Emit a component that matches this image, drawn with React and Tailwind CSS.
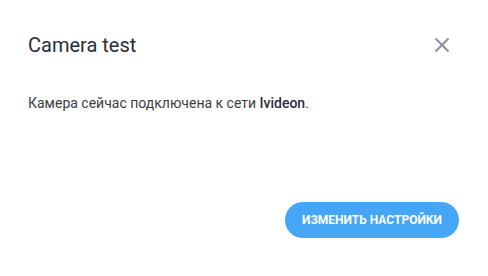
export default function App() {
  return (
    <div className="w-[488px] h-[276px] bg-white flex flex-col px-[28px] pt-[32px] pb-[38px]" style={{ fontFamily: 'Roboto, "Liberation Sans", sans-serif' }}>
      <div className="flex items-center justify-between">
        <h1 className="text-[20px] leading-[26px] font-normal text-[#2b2e36]">Camera test</h1>
        <button className="w-[24px] h-[24px] flex items-center justify-center mr-[6px]">
          <svg width="16" height="16" viewBox="0 0 16 16">
            <path d="M1.5 1.5L14.5 14.5M14.5 1.5L1.5 14.5" stroke="#8c919b" strokeWidth="2" />
          </svg>
        </button>
      </div>
      <p className="mt-[36px] text-[14px] leading-[18px] text-[#3a3d45]">
        Камера сейчас подключена к сети <span className="font-medium text-[#2b2e36]">Ivideon</span>.
      </p>
      <div className="mt-auto flex justify-end">
        <button className="h-[36px] px-[17px] rounded-full bg-[#45a6f7] text-white text-[12px] font-bold uppercase mr-[1px]">
          Изменить настройки
        </button>
      </div>
    </div>
  );
}
